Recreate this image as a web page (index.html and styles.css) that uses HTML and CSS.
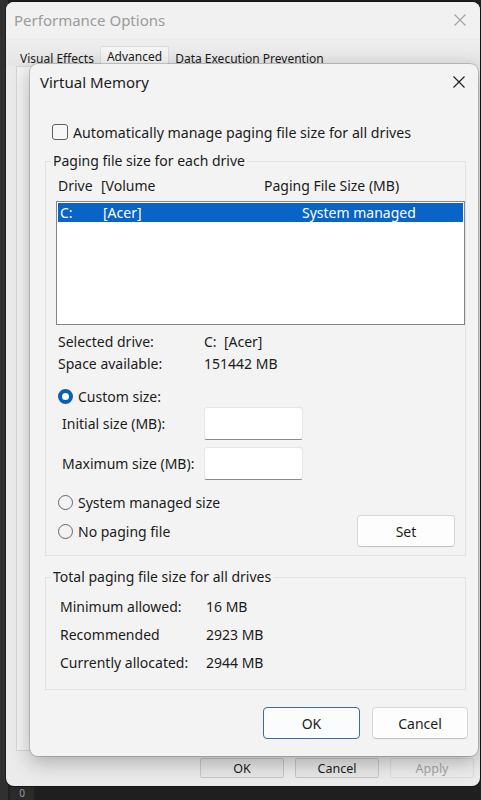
FILE: index.html
```html
<!DOCTYPE html>
<html lang="en">
<head>
<meta charset="utf-8">
<title>Virtual Memory</title>
<link rel="stylesheet" href="styles.css">
</head>
<body>
<div class="desktop">
  <div class="side-strip"></div>
  <div class="tray-digit">0</div>

  <!-- parent window: Performance Options -->
  <div class="window perf">
    <div class="perf-title">
      <span class="perf-caption">Performance Options</span>
      <svg class="close-icon close-dim" width="12" height="12" viewBox="0 0 12 12"><path d="M0.5 0.5 L11.5 11.5 M11.5 0.5 L0.5 11.5"/></svg>
    </div>
    <div class="tabs">
      <span class="tab">Visual Effects</span>
      <span class="tab tab-active">Advanced</span>
      <span class="tab">Data Execution Prevention</span>
    </div>
    <div class="perf-panel"></div>
    <div class="perf-buttons">
      <button class="btn-classic">OK</button>
      <button class="btn-classic">Cancel</button>
      <button class="btn-classic" disabled>Apply</button>
    </div>
  </div>

  <!-- modal dialog: Virtual Memory -->
  <div class="window vm">
    <div class="vm-title">
      <span>Virtual Memory</span>
      <svg class="close-icon" width="12" height="12" viewBox="0 0 12 12"><path d="M0.5 0.5 L11.5 11.5 M11.5 0.5 L0.5 11.5"/></svg>
    </div>
    <div class="vm-body">
      <label class="check-row"><span class="checkbox"></span>Automatically manage paging file size for all drives</label>

      <fieldset class="group group-drives">
        <legend>Paging file size for each drive</legend>
        <div class="list-head">
          <span>Drive</span><span>[Volume</span><span>Paging File Size (MB)</span>
        </div>
        <div class="listbox">
          <div class="list-row selected">
            <span>C:</span><span>[Acer]</span><span>System managed</span>
          </div>
        </div>
        <div class="info-grid">
          <span>Selected drive:</span><span>C:&nbsp; [Acer]</span>
          <span>Space available:</span><span>151442 MB</span>
        </div>
        <div class="radio-row radio-custom"><span class="radio checked"></span>Custom size:</div>
        <div class="field-row field-initial"><span class="field-label">Initial size (MB):</span><span class="textbox"></span></div>
        <div class="field-row field-max"><span class="field-label">Maximum size (MB):</span><span class="textbox"></span></div>
        <div class="radio-row radio-system"><span class="radio"></span>System managed size</div>
        <div class="radio-row radio-none">
          <span class="radio"></span>No paging file
          <button class="btn set-btn">Set</button>
        </div>
      </fieldset>

      <fieldset class="group group-total">
        <legend>Total paging file size for all drives</legend>
        <div class="total-grid">
          <span>Minimum allowed:</span><span>16 MB</span>
          <span>Recommended</span><span>2923 MB</span>
          <span>Currently allocated:</span><span>2944 MB</span>
        </div>
      </fieldset>

      <div class="dialog-buttons">
        <button class="btn btn-default">OK</button>
        <button class="btn">Cancel</button>
      </div>
    </div>
  </div>
</div>
</body>
</html>
```
FILE: styles.css
```css
* { box-sizing: border-box; }

html, body {
  margin: 0;
  height: 100%;
}

body {
  background: #1d1d1d;
  font-family: "Noto Sans", "Segoe UI", "DejaVu Sans", sans-serif;
  font-size: 14px;
  color: #1b1b1b;
  overflow: hidden;
}

.desktop {
  position: relative;
  width: 481px;
  height: 800px;
  background: #1f1f1f;
  overflow: hidden;
}

.side-strip {
  position: absolute;
  left: 0;
  top: 0;
  width: 8px;
  height: 800px;
  background: #303030;
}

.tray-digit {
  position: absolute;
  left: 10px;
  top: 787px;
  width: 24px;
  height: 13px;
  background: #2a2a2a;
  color: #9a9a9a;
  font-size: 10px;
  line-height: 13px;
  text-align: center;
}

/* ---------- parent window ---------- */

.perf {
  position: absolute;
  left: 6px;
  top: 2px;
  width: 474px;
  height: 784px;
  border-radius: 8px;
  background: #ebebeb;
  box-shadow: 0 0 0 1px rgba(0, 0, 0, 0.35);
  display: flex;
  flex-direction: column;
  overflow: hidden;
}

.perf-title {
  height: 36px;
  flex: none;
  display: flex;
  align-items: center;
  justify-content: space-between;
  padding: 0 14px 0 8px;
  background: #f1f1f1;
  font-size: 15px;
}

.perf-caption {
  color: #9b9b9b;
}

.close-icon {
  display: block;
  fill: none;
  stroke: #1b1b1b;
  stroke-width: 1.1;
}

.close-dim {
  stroke: #a3a3a3;
}

.tabs {
  height: 28px;
  flex: none;
  display: flex;
  align-items: flex-end;
  padding-left: 8px;
  background: linear-gradient(#eeeeee, #e6e6e6);
  font-size: 12px;
}

.tab {
  height: 16px;
  line-height: 18px;
  padding: 0 6px;
  color: #1b1b1b;
}

.tab-active {
  height: 20px;
  line-height: 18px;
  padding: 1px 6px 0;
  background: #f4f4f4;
  border: 1px solid #dadada;
  border-bottom: none;
  border-radius: 2px 2px 0 0;
}

.perf-panel {
  flex: 1;
  margin: 0 6px 0 10px;
  background: #f3f3f3;
  border: 1px solid #d6d6d6;
}

.perf-buttons {
  flex: none;
  display: flex;
  justify-content: flex-end;
  gap: 11px;
  padding: 7px 6px 8px 0;
}

.btn-classic {
  width: 84px;
  height: 20px;
  padding: 0;
  font: inherit;
  font-size: 12.5px;
  color: #1b1b1b;
  background: #e6e6e6;
  border: 1px solid #c6c6c6;
  border-radius: 2px;
}

.btn-classic:disabled {
  color: #a5a5a5;
  background: #ececec;
  border-color: #dcdcdc;
}

/* ---------- Virtual Memory dialog ---------- */

.vm {
  position: absolute;
  left: 30px;
  top: 64px;
  width: 448px;
  height: 692px;
  border-radius: 8px;
  background: #f3f3f3;
  box-shadow: 0 0 0 1px rgba(0, 0, 0, 0.16), 0 6px 20px rgba(0, 0, 0, 0.28);
  display: flex;
  flex-direction: column;
}

.vm-title {
  height: 36px;
  flex: none;
  display: flex;
  align-items: center;
  justify-content: space-between;
  padding: 0 13px 0 10px;
  font-size: 15px;
  color: #1b1b1b;
}

.vm-body {
  flex: 1;
  display: flex;
  flex-direction: column;
  padding: 0 12px 0 15px;
}

.check-row {
  margin-top: 22px;
  height: 20px;
  display: flex;
  align-items: center;
  gap: 5px;
  padding-left: 7px;
  font-size: 14.2px;
}

.checkbox {
  width: 16px;
  height: 16px;
  border: 1px solid #5e5e5e;
  border-radius: 3px;
  background: #f7f7f7;
}

.group {
  margin: 9px 0 0;
  padding: 0 0 8px 10px;
  border: 1px solid #e1e1e1;
  min-inline-size: 0;
}

.group legend {
  padding: 0 2px;
  margin-left: -5px;
  line-height: 20px;
}

.list-head {
  margin-top: 5px;
  height: 20px;
  line-height: 20px;
  display: grid;
  grid-template-columns: 43px 163px 1fr;
  padding-left: 2px;
}

.listbox {
  margin-top: 5px;
  height: 124px;
  background: #ffffff;
  border: 1px solid #858585;
  padding: 1px;
}

.list-row {
  height: 19px;
  line-height: 19px;
  display: grid;
  grid-template-columns: 43px 199px 1fr;
  padding-left: 2px;
}

.list-row.selected {
  background: #0864c6;
  color: #ffffff;
}

.info-grid {
  margin-top: 6px;
  display: grid;
  grid-template-columns: 146px 1fr;
  line-height: 22px;
  padding-left: 2px;
}

.radio-row {
  height: 20px;
  display: flex;
  align-items: center;
  gap: 5px;
  padding-left: 2px;
}

.radio-custom { margin-top: 11px; }
.radio-system { margin-top: 12px; }

.radio-none {
  margin-top: 3px;
  height: 32px;
}

.radio {
  width: 15px;
  height: 15px;
  border-radius: 50%;
  border: 1px solid #666666;
  flex: none;
}

.radio.checked {
  border: 4.5px solid #0a5fb5;
  background: #ffffff;
}

.field-row {
  height: 33px;
  display: grid;
  grid-template-columns: 142px 99px;
  align-items: center;
  padding-left: 6px;
}

.field-initial { margin-top: 1px; }
.field-max { margin-top: 7px; }

.textbox {
  height: 33px;
  background: #ffffff;
  border: 1px solid #e6e6e6;
  border-bottom: 1px solid #8a8a8a;
  border-radius: 3px;
}

.btn {
  height: 32px;
  padding: 0;
  font: inherit;
  color: #1b1b1b;
  background: #fdfdfd;
  border: 1px solid #d6d6d6;
  border-bottom-color: #c2c2c2;
  border-radius: 4px;
}

.set-btn {
  width: 98px;
  margin-left: auto;
  margin-right: 10px;
}

.group-total {
  margin-top: 11px;
  padding-bottom: 13px;
}

.total-grid {
  margin-top: 5px;
  display: grid;
  grid-template-columns: 146px 1fr;
  grid-auto-rows: 28px;
  align-items: center;
  padding-left: 4px;
}

.dialog-buttons {
  margin: 17px -2px 0 0;
  display: flex;
  justify-content: flex-end;
  gap: 12px;
}

.dialog-buttons .btn {
  width: 96px;
}

.dialog-buttons .btn-default {
  width: 97px;
  border-color: #3d6b9e;
  background: #fbfcfe;
}
```
